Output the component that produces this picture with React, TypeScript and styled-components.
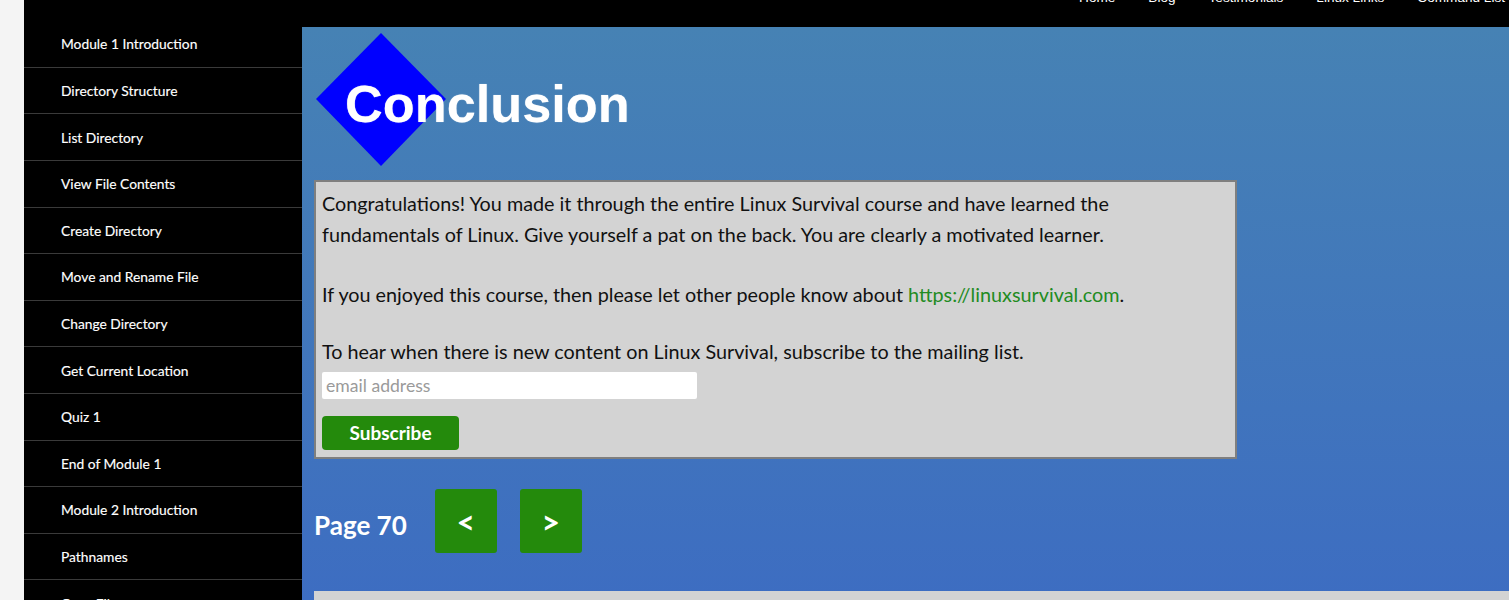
import React from "react";
import styled, { createGlobalStyle } from "styled-components";

const GlobalStyle = createGlobalStyle`
  html, body { margin: 0; padding: 0; background: #f4f4f4; overflow: hidden; }
  body { font-family: Lato, "Open Sans", sans-serif; }
  * { box-sizing: border-box; }
`;

const Page = styled.div`
  margin-left: 24px;
  display: flex;
  background: #000;
  height: 600px;
  overflow: hidden;
`;

const Sidebar = styled.nav`
  width: 278px;
  flex: none;
  background: #000;
  padding-top: 21.2px;
  display: flex;
  flex-direction: column;
`;

const SideItem = styled.a`
  display: flex;
  align-items: center;
  flex: none;
  height: 46.6px;
  border-bottom: 1px solid #3a3a3a;
  padding-left: 37px;
  color: #fff;
  font-size: 13.8px;
  text-decoration: none;
  -webkit-text-stroke: 0.15px #fff;
`;

const Column = styled.div`
  flex: 1;
  min-width: 0;
  display: flex;
  flex-direction: column;
`;

const TopBar = styled.header`
  height: 27px;
  flex: none;
  background: #000;
  display: flex;
  justify-content: flex-end;
  align-items: flex-start;
  gap: 33px;
  padding-right: 4px;
  overflow: hidden;
`;

const TopLink = styled.a`
  font-family: "Liberation Sans", Arial, sans-serif;
  font-size: 13.6px;
  line-height: 14px;
  margin-top: -9px;
  color: #fff;
  text-decoration: none;
`;

const Main = styled.main`
  flex: 1;
  background: linear-gradient(to bottom, #4682b4 0%, #3a66c6 100%);
  padding: 6px 0 0 12px;
  display: flex;
  flex-direction: column;
  align-items: flex-start;
`;

const Logo = styled.div`
  display: grid;
  height: 133px;
  margin-bottom: 14px;
`;

const Diamond = styled.svg`
  grid-area: 1 / 1;
  margin-left: 2px;
`;

const LogoTitle = styled.h1`
  grid-area: 1 / 1;
  align-self: start;
  margin: 0;
  padding: 45px 0 0 31px;
  font-family: "Liberation Sans", Arial, sans-serif;
  font-weight: bold;
  font-size: 52.3px;
  line-height: 52px;
  color: #fff;
  text-shadow: 0 0 1px rgba(255, 255, 255, 0.6);
`;

const ContentBox = styled.section`
  width: 923px;
  border: 2px solid #7f7f7f;
  background: #d3d3d3;
  padding: 6px 6px 7px;
  color: #111;
  font-size: 19.8px;
  line-height: 31px;
`;

const Para = styled.p<{ $after: number }>`
  margin: 0 0 ${(p) => p.$after}px;
`;

const Link = styled.a`
  color: #228b22;
  text-decoration: none;
`;

const EmailInput = styled.input`
  display: block;
  width: 375px;
  height: 27px;
  border: none;
  border-radius: 2px;
  background: #fff;
  padding: 0 4px;
  font-family: Lato, sans-serif;
  font-size: 17.6px;
  color: #333;
  &::placeholder { color: #9a9a9a; }
`;

const SubscribeButton = styled.button`
  display: block;
  margin-top: 17px;
  width: 137px;
  height: 34px;
  border: none;
  border-radius: 4px;
  background: #248a0c;
  color: #fff;
  font-family: Lato, sans-serif;
  font-weight: bold;
  font-size: 19px;
  padding: 0 0 1px;
`;

const Pager = styled.div`
  margin-top: 30px;
  display: flex;
  align-items: center;
`;

const PageLabel = styled.span`
  font-weight: bold;
  font-size: 26px;
  color: #fff;
  margin-right: 28px;
  padding-top: 7px;
`;

const PageButton = styled.button`
  width: 62px;
  height: 64px;
  border: none;
  border-radius: 3px;
  background: #248a0c;
  color: #fff;
  font-family: Lato, sans-serif;
  font-weight: bold;
  font-size: 32px;
  & + & { margin-left: 23px; }
`;

const NextBox = styled.section`
  margin-top: 38px;
  align-self: stretch;
  height: 200px;
  background: #d3d3d3;
`;

const sideItems = [
  "Module 1 Introduction",
  "Directory Structure",
  "List Directory",
  "View File Contents",
  "Create Directory",
  "Move and Rename File",
  "Change Directory",
  "Get Current Location",
  "Quiz 1",
  "End of Module 1",
  "Module 2 Introduction",
  "Pathnames",
  "Copy Files",
];

const topLinks = ["Home", "Blog", "Testimonials", "Linux Links", "Command List"];

export default function App() {
  return (
    <>
      <GlobalStyle />
      <Page>
        <Sidebar>
          {sideItems.map((s) => (
            <SideItem key={s} href="#">{s}</SideItem>
          ))}
        </Sidebar>
        <Column>
          <TopBar>
            {topLinks.map((l) => (
              <TopLink key={l} href="#">{l}</TopLink>
            ))}
          </TopBar>
          <Main>
            <Logo>
              <Diamond width="130" height="133" viewBox="0 0 130 133">
                <polygon points="65,0 130,66 65,133 0,66" fill="#0000ff" />
              </Diamond>
              <LogoTitle>Conclusion</LogoTitle>
            </Logo>
            <ContentBox>
              <Para $after={28.5}>
                Congratulations! You made it through the entire Linux Survival course and have learned the
                fundamentals of Linux. Give yourself a pat on the back. You are clearly a motivated learner.
              </Para>
              <Para $after={26}>
                If you enjoyed this course, then please let other people know about{" "}
                <Link href="#">https://linuxsurvival.com</Link>.
              </Para>
              <Para $after={5.5}>
                To hear when there is new content on Linux Survival, subscribe to the mailing list.
              </Para>
              <EmailInput type="email" placeholder="email address" />
              <SubscribeButton type="button">Subscribe</SubscribeButton>
            </ContentBox>
            <Pager>
              <PageLabel>Page 70</PageLabel>
              <PageButton type="button">&lt;</PageButton>
              <PageButton type="button">&gt;</PageButton>
            </Pager>
            <NextBox />
          </Main>
        </Column>
      </Page>
    </>
  );
}
